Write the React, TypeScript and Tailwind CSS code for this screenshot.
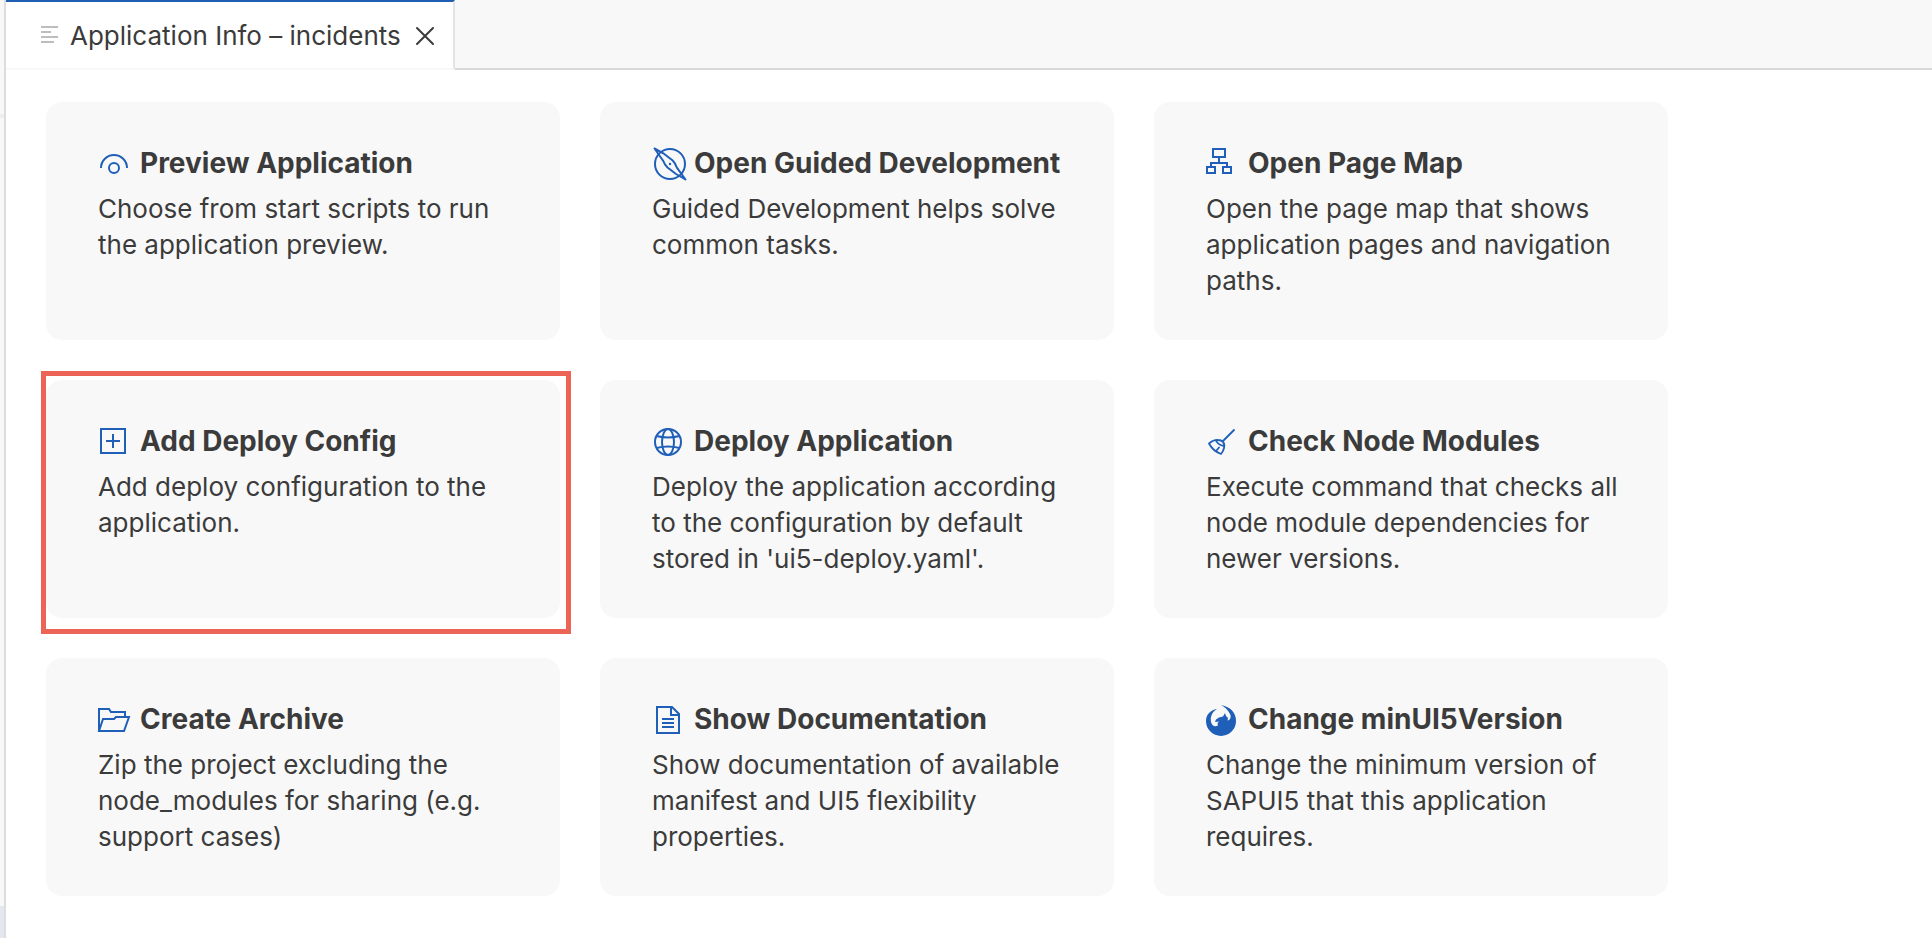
import type { ReactNode } from "react";

type CardProps = {
  title: string;
  text: string;
  icon: ReactNode;
  highlighted?: boolean;
};

function Icon({ children }: { children: ReactNode }) {
  return (
    <svg
      viewBox="0 0 32 32"
      className="size-8 shrink-0 overflow-visible text-[#1f5fb8]"
      fill="none"
      stroke="currentColor"
      strokeWidth="2"
      aria-hidden="true"
    >
      {children}
    </svg>
  );
}

const cards: CardProps[] = [
  {
    title: "Preview Application",
    text: "Choose from start scripts to run the application preview.",
    icon: (
      <Icon>
        <path d="M3 21C3 13.500 9 8 16 8S29 13.500 29 21" />
        <circle cx="16" cy="21" r="5" />
      </Icon>
    ),
  },
  {
    title: "Open Guided Development",
    text: "Guided Development helps solve common tasks.",
    icon: (
      <Icon>
        <circle cx="18" cy="17" r="15" />
        <path
          d="M2.500 1.500L11.300 6.300L20.700 13.500Q23.500 16.500 24.700 20.300L33.500 32.500L24 27L15.500 20.500Q12.500 17.500 11.300 14Z"
          strokeLinejoin="round"
        />
        <circle cx="18" cy="17" r="1.200" fill="currentColor" stroke="none" />
      </Icon>
    ),
  },
  {
    title: "Open Page Map",
    text: "Open the page map that shows application pages and navigation paths.",
    icon: (
      <Icon>
        <path d="M7 2h12v8H7zM1 20h8v6H1zM17 20h8v6h-8zM13 10v6M5 20v-4h16v4" />
      </Icon>
    ),
  },
  {
    title: "Add Deploy Config",
    text: "Add deploy configuration to the application.",
    highlighted: true,
    icon: (
      <Icon>
        <path d="M3 4h24v24H3zM15 9v14M8 16h14" />
      </Icon>
    ),
  },
  {
    title: "Deploy Application",
    text: "Deploy the application according to the configuration by default stored in 'ui5-deploy.yaml'.",
    icon: (
      <Icon>
        <circle cx="16" cy="17" r="13" />
        <ellipse cx="16" cy="17" rx="6" ry="13" />
        <path d="M4.500 11Q16 14 27.500 11M4.500 23Q16 20 27.500 23" />
      </Icon>
    ),
  },
  {
    title: "Check Node Modules",
    text: "Execute command that checks all node module dependencies for newer versions.",
    icon: (
      <Icon>
        <path
          d="M28 5L16.500 16.500M3 18.500Q8 14.500 12 15Q15.500 15 17 17Q19 19 18 23Q17.500 26 15 29Q7 26 3 18.500ZM10 15.500Q12 20 18 21M10.500 25.500L13 22.500"
          strokeLinecap="round"
          strokeLinejoin="round"
          strokeWidth="1.800"
        />
      </Icon>
    ),
  },
  {
    title: "Create Archive",
    text: "Zip the project excluding the node_modules for sharing (e.g. support cases)",
    icon: (
      <Icon>
        <path d="M1 28V6h10l2 3h14v5M1 28L5 16h11l2-2h13L26 28Z" />
      </Icon>
    ),
  },
  {
    title: "Show Documentation",
    text: "Show documentation of available manifest and UI5 flexibility properties.",
    icon: (
      <Icon>
        <path d="M5 4h15l7 7v19H5zM19 4v8h8M10 16h12M10 20h12M10 24h12" />
      </Icon>
    ),
  },
  {
    title: "Change minUI5Version",
    text: "Change the minimum version of SAPUI5 that this application requires.",
    icon: (
      <Icon>
        <path
          d="M15 2C25 4 30 10 30 18A15 15 0 0 1 0 18C0 12 4 7 11 6C6 9 4 14 5 19C6 23 9 24 12 22.500C11 20 12 19 13.500 18.500L9 19L10 16.500L13 14.500L17 13.500L19 10L20 13L22 15L21.500 17.500C24.500 17 25.500 14 24 11C22 7 19 4 15 2Z"
          fill="currentColor"
          stroke="none"
        />
      </Icon>
    ),
  },
];

function Card({ title, text, icon, highlighted }: CardProps) {
  return (
    <button
      type="button"
      className="relative flex min-h-[238px] flex-col rounded-2xl bg-[#f8f8f8] pt-[41px] pr-11 pb-10 pl-[52px] text-left"
    >
      <span className="flex items-center gap-[10px] text-[28px] leading-10 font-bold whitespace-nowrap">
        {icon}
        {title}
      </span>
      <span className="mt-2 text-[26px] leading-9">{text}</span>
      {highlighted && (
        <span className="pointer-events-none absolute -top-[9px] -right-[11px] -bottom-4 -left-[5px] border-[5px] border-[#ec6455]" />
      )}
    </button>
  );
}

export default function App() {
  return (
    <div className="flex min-h-screen bg-white font-['Inter','Liberation_Sans',sans-serif] text-[#3b3b3b]">
      <div className="flex w-[6px] shrink-0 flex-col border-r-2 border-[#dddddd] bg-[#f8f8f8]">
        <div className="mt-[114px] h-1 bg-[#eeeeee]" />
        <div className="mt-auto h-8 bg-[#e4e7f0]" />
      </div>
      <div className="min-w-0 flex-1">
        <div className="flex h-[70px]">
          <div className="flex items-center border-t-2 border-r-2 border-b-2 border-t-[#205eb4] border-r-[#e3e3e3] border-b-[#f8f8f8] pt-[2px] pr-[18px] pl-[34px]">
            <svg viewBox="0 0 20 20" className="size-5 text-[#bdbdbd]" stroke="currentColor" strokeWidth="2" aria-hidden="true">
              <path d="M1 1h17M1 6h10M1 11h17M1 16h13" />
            </svg>
            <span className="ml-[10px] text-[26px] leading-9 whitespace-nowrap">Application Info – incidents</span>
            <button type="button" aria-label="Close tab" className="ml-[14px]">
              <svg viewBox="0 0 20 20" className="size-5" stroke="currentColor" strokeWidth="2" strokeLinecap="round" aria-hidden="true">
                <path d="M2 2l16 16M18 2L2 18" />
              </svg>
            </button>
          </div>
          <div className="flex-1 border-b-2 border-[#d8d8d8] bg-[#f8f8f8]" />
        </div>
        <main className="grid grid-cols-[repeat(auto-fill,514px)] gap-10 px-10 pt-8 pb-10">
          {cards.map((card) => (
            <Card key={card.title} {...card} />
          ))}
        </main>
      </div>
    </div>
  );
}
